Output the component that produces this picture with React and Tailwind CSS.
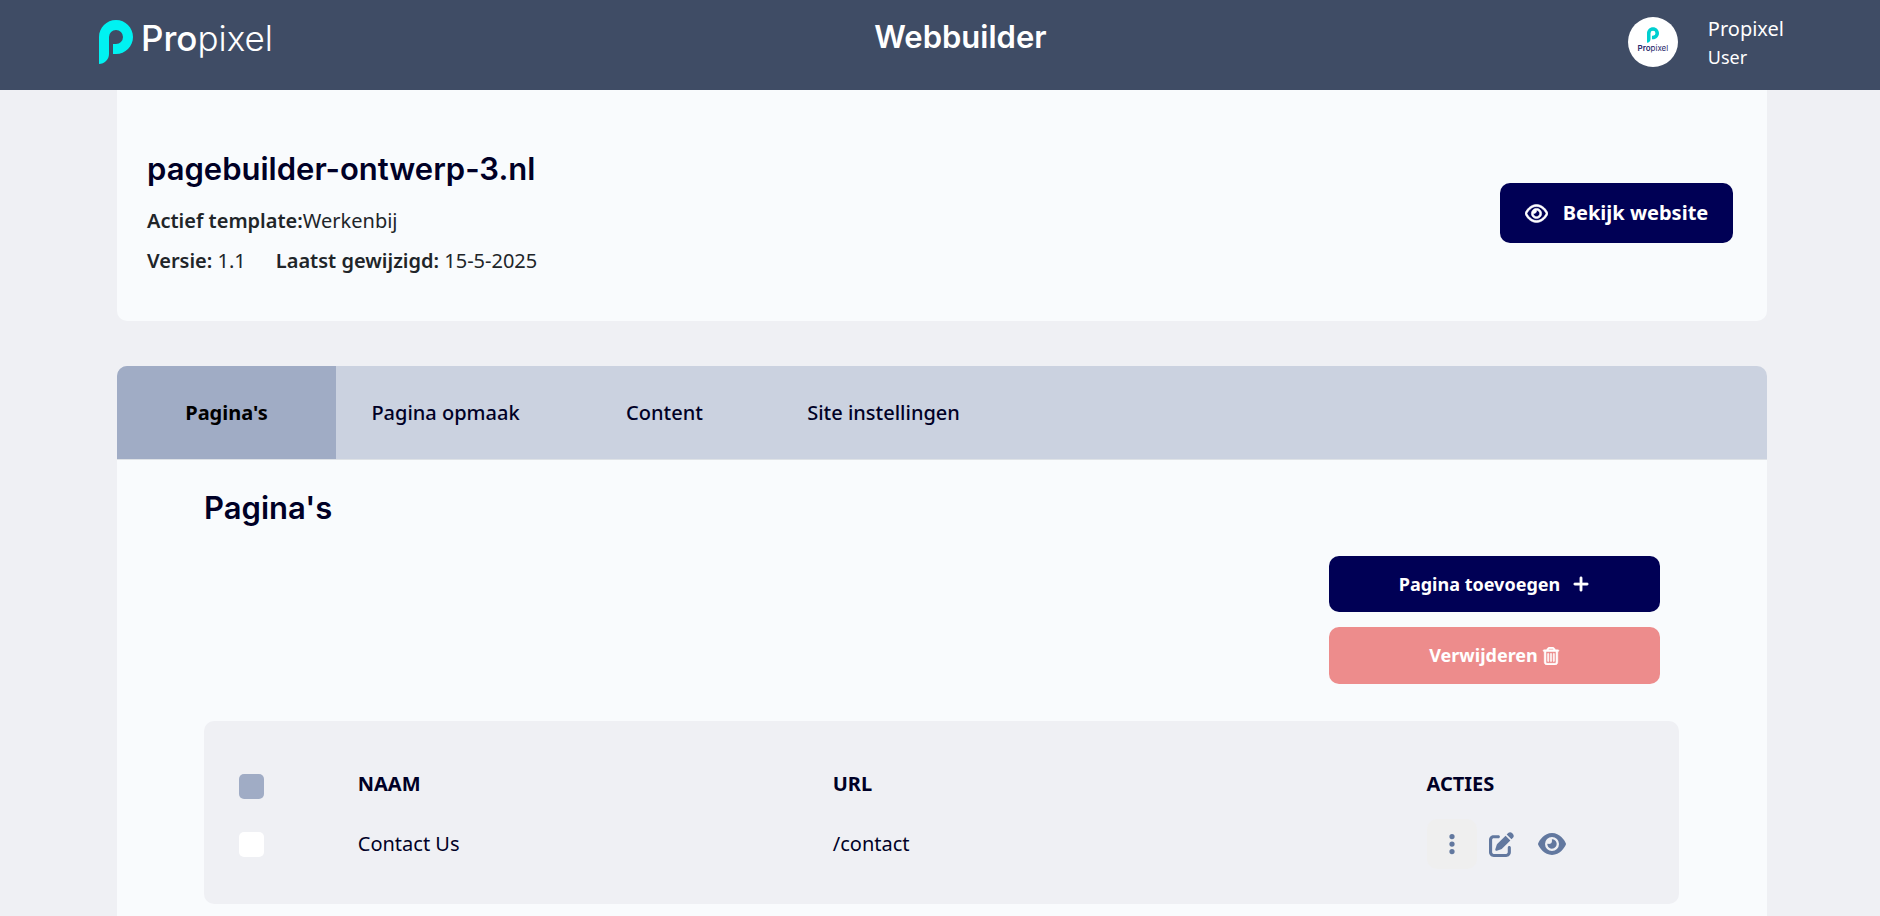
import { useState } from 'react';
import { FaEllipsisVertical, FaEye, FaPenToSquare, FaPlus, FaRegEye, FaRegTrashCan } from 'react-icons/fa6';

const tabs = ["Pagina's", 'Pagina opmaak', 'Content', 'Site instellingen'];

const pages = [{ id: 1, name: 'Contact Us', url: '/contact' }];

function LogoMark({ className }) {
  return (
    <svg viewBox="0 0 34 44" className={className} fill="currentColor" aria-hidden="true">
      <path d="M0 17C0 7.600 7.600 0 17 0s17 7.600 17 17-7.600 17-17 17h-3V24h3a7 7 0 1 0-7-7v17c0 5.500-4.500 10-10 10Z" />
    </svg>
  );
}

function Header() {
  return (
    <header className="flex h-[90px] items-start justify-between bg-[#3f4c65] pl-[99px] pr-24 text-white">
      <a href="#" className="flex items-start gap-2 pt-5">
        <LogoMark className="h-11 w-[34px] text-[#00f2f2]" />
        <span className="font-[Inter,sans-serif] text-[35px] leading-9 font-light">
          <span className="font-medium">Pro</span>pixel
        </span>
      </a>
      <h1 className="pt-[19px] pl-5 font-[Inter,sans-serif] text-[31px] leading-9 font-semibold">Webbuilder</h1>
      <div className="flex items-start gap-[30px] pt-[17px]">
        <div className="flex size-[50px] flex-col items-center rounded-full bg-white pt-[10px]">
          <LogoMark className="h-4 w-3 text-[#00cfd0]" />
          <span className="font-[Inter,sans-serif] text-[8px] leading-[10px] text-[#27276a]">
            <span className="font-semibold">Pro</span>pixel
          </span>
        </div>
        <div className="-mt-[2px]">
          <p className="text-[20px] leading-7">Propixel</p>
          <p className="text-[18px] leading-7">User</p>
        </div>
      </div>
    </header>
  );
}

function SiteCard() {
  return (
    <section className="flex items-start justify-between rounded-b-[10px] bg-[#f9fbfd] pt-[59px] pr-[34px] pb-10 pl-[30px]">
      <div className="text-[20px] leading-10 text-[#212529]">
        <h2 className="mb-3 font-[Inter,sans-serif] text-[31px] leading-10 font-semibold text-[#000026]">
          pagebuilder-ontwerp-3.nl
        </h2>
        <p>
          <strong className="font-semibold">Actief template:</strong>Werkenbij
        </p>
        <p className="flex gap-[30px]">
          <span><strong className="font-semibold">Versie:</strong> 1.1</span>
          <span><strong className="font-semibold">Laatst gewijzigd:</strong> 15-5-2025</span>
        </p>
      </div>
      <a href="#" className="mt-[34px] flex h-[60px] w-[233px] items-center justify-center gap-[15px] rounded-[10px] bg-[#000055] text-[20px] font-bold text-white">
        <FaRegEye className="size-[23px] stroke-current stroke-[16]" />
        Bekijk website
      </a>
    </section>
  );
}

function PagesTable() {
  const [selected, setSelected] = useState([]);

  const toggle = (id) => {
    setSelected(selected.includes(id) ? selected.filter(s => s !== id) : [...selected, id]);
  };

  return (
    <div className="mt-[37px] rounded-[10px] bg-[#eff0f4] pt-[33px] pr-[15px] pb-[30px] pl-[35px]">
      <table className="w-full table-fixed text-left text-[20px] text-[#000026]">
        <thead>
          <tr className="h-[60px]">
            <th className="w-1/12 pt-1">
              <input
                type="checkbox"
                aria-label="Alles selecteren"
                checked={selected.length === pages.length}
                onChange={(e) => setSelected(e.target.checked ? pages.map(p => p.id) : [])}
                className="block size-[25px] appearance-none rounded-[5px] bg-[#a0acc5] checked:bg-[#000055]"
              />
            </th>
            <th className="w-4/12 font-bold">NAAM</th>
            <th className="w-5/12 font-bold">URL</th>
            <th className="w-2/12 font-bold">ACTIES</th>
          </tr>
        </thead>
        <tbody>
          {pages.map(page => (
            <tr key={page.id} className="h-[60px]">
              <td>
                <input
                  type="checkbox"
                  aria-label={page.name}
                  checked={selected.includes(page.id)}
                  onChange={() => toggle(page.id)}
                  className="block size-[25px] appearance-none rounded-[5px] bg-white checked:bg-[#000055]"
                />
              </td>
              <td>{page.name}</td>
              <td>{page.url}</td>
              <td>
                <div className="flex items-center text-[#62789f]">
                  <button aria-label="Meer" className="flex size-[50px] items-center justify-center rounded-[10px] bg-[#efefef]">
                    <FaEllipsisVertical className="size-6" />
                  </button>
                  <button aria-label="Bewerken" className="ml-3">
                    <FaPenToSquare className="size-[25px]" />
                  </button>
                  <button aria-label="Bekijken" className="ml-6">
                    <FaEye className="size-7" />
                  </button>
                </div>
              </td>
            </tr>
          ))}
        </tbody>
      </table>
    </div>
  );
}

export default function App() {
  const [activeTab, setActiveTab] = useState(tabs[0]);

  return (
    <div className="flex min-h-screen flex-col bg-[#eff0f4] font-['Noto_Sans',sans-serif]">
      <Header />
      <main className="flex flex-1 flex-col pr-[113px] pl-[117px]">
        <SiteCard />

        <nav className="mt-[45px] flex h-[94px] overflow-hidden rounded-t-[10px] border-b border-[#dee2e6] bg-[#cbd2e0] text-[20px] text-[#000026]">
          {tabs.map(tab => (
            <button
              key={tab}
              onClick={() => setActiveTab(tab)}
              className={`w-[219px] ${
                activeTab === tab ? 'bg-[#a0acc5] font-bold text-black' : 'font-medium'
              }`}
            >
              {tab}
            </button>
          ))}
        </nav>

        <section className="flex-1 bg-[#f9fbfd] pt-7 pr-[88px] pb-3 pl-[87px]">
          <h2 className="font-[Inter,sans-serif] text-[31px] leading-10 font-semibold text-[#000026]">Pagina's</h2>
          <div className="mt-7 mr-[19px] flex flex-col items-end gap-[15px] text-[18px] font-bold text-white">
            <button className="flex h-14 w-[331px] items-center justify-center gap-3 rounded-[10px] bg-[#000055]">
              Pagina toevoegen
              <FaPlus className="size-[18px] stroke-current stroke-[16]" />
            </button>
            <button className="flex h-[57px] w-[331px] items-center justify-center gap-1 rounded-[10px] bg-[#ed8c8c]">
              Verwijderen
              <FaRegTrashCan className="size-[18px] stroke-current stroke-[16]" />
            </button>
          </div>
          <PagesTable />
        </section>
      </main>
    </div>
  );
}
